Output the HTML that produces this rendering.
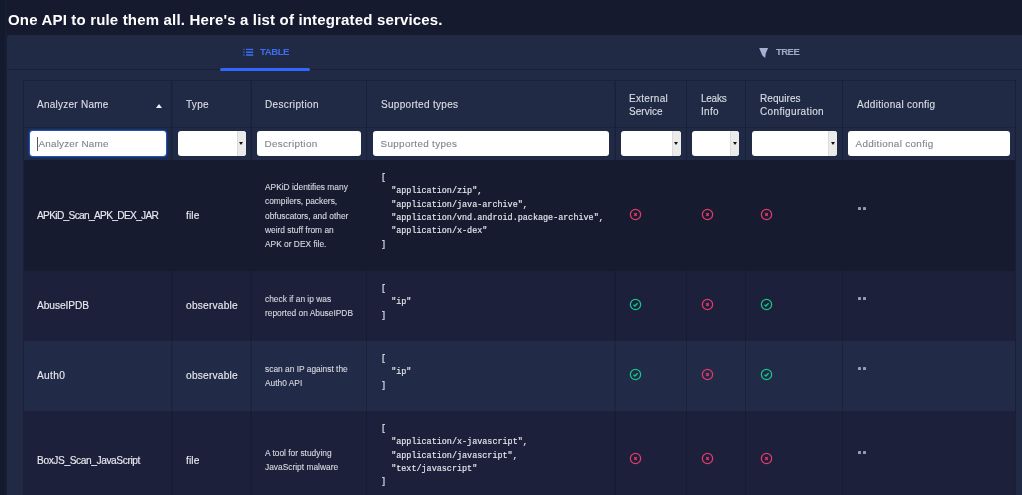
<!DOCTYPE html>
<html><head><meta charset="utf-8">
<style>
*{box-sizing:border-box;margin:0;padding:0}
html,body{width:1022px;height:495px;overflow:hidden;background:#151a2f;font-family:"Liberation Sans",sans-serif;color:#e6e8ee}
.a{position:absolute;white-space:nowrap;will-change:transform}
.tab{font-size:9.6px;font-weight:bold;line-height:12px}
.th{-webkit-text-stroke:0.14px #d9dde6;font-size:10px;color:#d9dde6;line-height:13.3px;letter-spacing:0.3px}
.cell{-webkit-text-stroke:0.14px #e8eaf0;font-size:10.2px;color:#e8eaf0;line-height:13px}
.desc{-webkit-text-stroke:0.1px #d8dbe2;font-size:8.4px;color:#d8dbe2;line-height:14.3px}
.mono{-webkit-text-stroke:0.15px #e6e8ee;font-family:"Liberation Mono",monospace;font-size:8.45px;color:#e6e8ee;line-height:13.35px;white-space:pre}
.inp{background:#fff;border-radius:3px;height:24.6px;top:131.1px}
.arr{position:absolute;right:0;top:0;width:9px;height:24.6px;background:#ebebeb;border-left:1px solid #dcdcdc;border-radius:0 3px 3px 0}
.arr:after{content:"";position:absolute;left:1.8px;top:11px;border-left:2.5px solid transparent;border-right:2.5px solid transparent;border-top:3px solid #111}
.ph{-webkit-text-stroke:0.12px #80858f;font-size:9.9px;color:#80858f;line-height:24px;padding-top:1.2px;padding-left:7.5px;letter-spacing:0.33px}
.ic{width:13px;height:13px}
.ic svg{display:block}
</style></head><body>

<div class="a" style="left:0;top:0;width:5px;height:495px;background:#141a2e"></div>
<div class="a" style="left:5px;top:0;width:2px;height:495px;background:#171d34"></div>
<div class="a" style="left:8px;top:10px;font-size:15px;font-weight:bold;color:#fff;letter-spacing:0.17px;line-height:20px">One API to rule them all. Here's a list of integrated services.</div>
<div class="a" style="left:7px;top:35px;width:1030px;height:470px;background:#212a45;border-radius:3px"></div>
<div class="a" style="left:7px;top:69px;width:1015px;height:1px;background:#1a1f35"></div>
<div class="a" style="left:220px;top:68.3px;width:90px;height:2.6px;background:#3366ff;border-radius:2px"></div>
<svg width="12" height="10" viewBox="0 0 12 10" style="position:absolute;left:242px;top:47px"><g fill="#3a6cf4"><rect x="1" y="1.8" width="1.8" height="1.3" opacity=".55"/><rect x="4" y="1.8" width="7.2" height="1.3"/><rect x="1" y="4.5" width="1.8" height="1.5" opacity=".55"/><rect x="4" y="4.5" width="7.2" height="1.5"/><rect x="1" y="7.2" width="1.8" height="1.6" opacity=".55"/><rect x="4" y="7.2" width="7.2" height="1.6"/></g></svg>
<div class="a tab" style="left:260px;top:45.6px;color:#3d6cf0;letter-spacing:-0.45px">TABLE</div>
<svg width="12" height="12" viewBox="0 0 12 12" style="position:absolute;left:757px;top:46px"><polygon points="2.2,2 11.1,2 8.7,7.6 8.3,11.6 7.5,11.4 5.2,9.2" fill="#a5b1d0"/></svg>
<div class="a tab" style="left:776px;top:45.6px;color:#a0abc8;letter-spacing:-0.6px">TREE</div>
<div class="a" style="left:23px;top:80px;width:993px;height:1px;background:#1c213a"></div>
<div class="a" style="left:23px;top:80px;width:1px;height:420px;background:#1a1f36"></div>
<div class="a" style="left:1015px;top:80px;width:1px;height:420px;background:#1a1f36"></div>
<div class="a" style="left:24px;top:127px;width:991px;height:1px;background:#1d223b"></div>
<div class="a" style="left:171px;top:81px;width:1px;height:79px;background:rgba(22,26,50,0.6)"></div>
<div class="a" style="left:172px;top:81px;width:1px;height:79px;background:rgba(22,26,50,0.3)"></div>
<div class="a" style="left:250px;top:81px;width:1px;height:79px;background:rgba(22,26,50,0.3)"></div>
<div class="a" style="left:251px;top:81px;width:1px;height:79px;background:rgba(22,26,50,0.6)"></div>
<div class="a" style="left:366px;top:81px;width:1px;height:79px;background:rgba(22,26,50,0.6)"></div>
<div class="a" style="left:614px;top:81px;width:1px;height:79px;background:rgba(22,26,50,0.3)"></div>
<div class="a" style="left:615px;top:81px;width:1px;height:79px;background:rgba(22,26,50,0.6)"></div>
<div class="a" style="left:686px;top:81px;width:1px;height:79px;background:rgba(22,26,50,0.6)"></div>
<div class="a" style="left:745px;top:81px;width:1px;height:79px;background:rgba(22,26,50,0.6)"></div>
<div class="a" style="left:842px;top:81px;width:1px;height:79px;background:rgba(22,26,50,0.6)"></div>
<div class="a th" style="left:37px;top:98px;letter-spacing:0.25px">Analyzer Name</div>
<div class="a th" style="left:186px;top:98px;letter-spacing:0.3px">Type</div>
<div class="a th" style="left:264.5px;top:98px;letter-spacing:0.35px">Description</div>
<div class="a th" style="left:381px;top:98px;letter-spacing:0.3px">Supported types</div>
<div class="a th" style="left:629px;top:92px;letter-spacing:0.3px">External<br><span style="letter-spacing:0.04px">Service</span></div>
<div class="a th" style="left:700.5px;top:92px;letter-spacing:0.3px"><span style="letter-spacing:-0.26px">Leaks</span><br>Info</div>
<div class="a th" style="left:760px;top:92px;letter-spacing:0.35px"><span style="letter-spacing:0.08px">Requires</span><br>Configuration</div>
<div class="a th" style="left:857px;top:98px;letter-spacing:0.3px">Additional config</div>
<div class="a" style="left:155.8px;top:104px;width:0;height:0;border-left:3.7px solid transparent;border-right:3.7px solid transparent;border-bottom:4px solid #f2f2f2"></div>
<div class="a inp" style="left:30px;width:136px;box-shadow:0 0 0 1px #2055ad,0 0 1px 1.8px rgba(18,60,135,.7)"><div class="ph" style="padding-left:8.5px;letter-spacing:0.2px">Analyzer Name</div><div style="position:absolute;left:7px;top:5.8px;width:1px;height:14px;background:#555"></div></div>
<div class="a inp" style="left:177.6px;width:67.6px"><div class="arr"></div></div>
<div class="a inp" style="left:256.6px;width:104.4px"><div class="ph">Description</div></div>
<div class="a inp" style="left:373px;width:236.3px"><div class="ph">Supported types</div></div>
<div class="a inp" style="left:621.3px;width:59.5px"><div class="arr"></div></div>
<div class="a inp" style="left:692.3px;width:47.4px"><div class="arr"></div></div>
<div class="a inp" style="left:752px;width:84.8px"><div class="arr"></div></div>
<div class="a inp" style="left:848.4px;width:161.6px"><div class="ph">Additional config</div></div>
<div class="a" style="left:24px;top:160px;width:991px;height:110.5px;background:#171b30"></div>
<div class="a" style="left:24px;top:270.5px;width:991px;height:70.5px;background:#1c203a"></div>
<div class="a" style="left:24px;top:341px;width:991px;height:70px;background:#212a46"></div>
<div class="a" style="left:24px;top:411px;width:991px;height:90px;background:#1c203a"></div>
<div class="a" style="left:171px;top:270.5px;width:1px;height:230px;background:rgba(10,12,28,0.22)"></div>
<div class="a" style="left:172px;top:270.5px;width:1px;height:230px;background:rgba(10,12,28,0.11)"></div>
<div class="a" style="left:250px;top:270.5px;width:1px;height:230px;background:rgba(10,12,28,0.11)"></div>
<div class="a" style="left:251px;top:270.5px;width:1px;height:230px;background:rgba(10,12,28,0.22)"></div>
<div class="a" style="left:366px;top:270.5px;width:1px;height:230px;background:rgba(10,12,28,0.22)"></div>
<div class="a" style="left:614px;top:270.5px;width:1px;height:230px;background:rgba(10,12,28,0.11)"></div>
<div class="a" style="left:615px;top:270.5px;width:1px;height:230px;background:rgba(10,12,28,0.22)"></div>
<div class="a" style="left:686px;top:270.5px;width:1px;height:230px;background:rgba(10,12,28,0.22)"></div>
<div class="a" style="left:745px;top:270.5px;width:1px;height:230px;background:rgba(10,12,28,0.22)"></div>
<div class="a" style="left:842px;top:270.5px;width:1px;height:230px;background:rgba(10,12,28,0.22)"></div>
<div class="a cell" style="left:37px;top:208.8px;letter-spacing:-0.69px">APKiD_Scan_APK_DEX_JAR</div>
<div class="a cell" style="left:186px;top:208.8px;letter-spacing:0.1px">file</div>
<div class="a desc" style="left:264.5px;top:180.2px;letter-spacing:0px">APKiD identifies many<br>compilers, packers,<br>obfuscators, and other<br>weird stuff from an<br>APK or DEX file.</div>
<div class="a mono" style="left:381px;top:172px">[
  "application/zip",
  "application/java-archive",
  "application/vnd.android.package-archive",
  "application/x-dex"
]</div>
<div class="a ic" style="left:629px;top:208px"><svg width="13" height="13" viewBox="0 0 13 13"><circle cx="6.5" cy="6.5" r="5.15" fill="none" stroke="#e23a6c" stroke-width="1.25"/><path d="M5.3 5.3L7.7 7.7M7.7 5.3L5.3 7.7" stroke="#e23a6c" stroke-width="1.35"/></svg></div>
<div class="a ic" style="left:700.5px;top:208px"><svg width="13" height="13" viewBox="0 0 13 13"><circle cx="6.5" cy="6.5" r="5.15" fill="none" stroke="#e23a6c" stroke-width="1.25"/><path d="M5.3 5.3L7.7 7.7M7.7 5.3L5.3 7.7" stroke="#e23a6c" stroke-width="1.35"/></svg></div>
<div class="a ic" style="left:759.5px;top:208px"><svg width="13" height="13" viewBox="0 0 13 13"><circle cx="6.5" cy="6.5" r="5.15" fill="none" stroke="#e23a6c" stroke-width="1.25"/><path d="M5.3 5.3L7.7 7.7M7.7 5.3L5.3 7.7" stroke="#e23a6c" stroke-width="1.35"/></svg></div>
<div class="a" style="left:857.6px;top:206.8px;width:3.2px;height:3px;background:#c9ccd4;border-radius:0.6px;opacity:.72"></div>
<div class="a" style="left:862.8px;top:206.8px;width:3.2px;height:3px;background:#c9ccd4;border-radius:0.6px;opacity:.72"></div>
<div class="a cell" style="left:37px;top:298.8px;letter-spacing:-0.08px">AbuseIPDB</div>
<div class="a cell" style="left:186px;top:298.8px;letter-spacing:0.21px">observable</div>
<div class="a desc" style="left:264.5px;top:292px;letter-spacing:0px">check if an ip was<br>reported on AbuseIPDB</div>
<div class="a mono" style="left:381px;top:282.7px">[
  "ip"
]</div>
<div class="a ic" style="left:629px;top:298px"><svg width="13" height="13" viewBox="0 0 13 13"><circle cx="6.5" cy="6.5" r="5.15" fill="none" stroke="#15c68c" stroke-width="1.25"/><path d="M4.5 6.7L5.9 8.0L8.6 5.2" fill="none" stroke="#15c68c" stroke-width="1.4"/></svg></div>
<div class="a ic" style="left:700.5px;top:298px"><svg width="13" height="13" viewBox="0 0 13 13"><circle cx="6.5" cy="6.5" r="5.15" fill="none" stroke="#e23a6c" stroke-width="1.25"/><path d="M5.3 5.3L7.7 7.7M7.7 5.3L5.3 7.7" stroke="#e23a6c" stroke-width="1.35"/></svg></div>
<div class="a ic" style="left:759.5px;top:298px"><svg width="13" height="13" viewBox="0 0 13 13"><circle cx="6.5" cy="6.5" r="5.15" fill="none" stroke="#15c68c" stroke-width="1.25"/><path d="M4.5 6.7L5.9 8.0L8.6 5.2" fill="none" stroke="#15c68c" stroke-width="1.4"/></svg></div>
<div class="a" style="left:857.6px;top:296.8px;width:3.2px;height:3px;background:#c9ccd4;border-radius:0.6px;opacity:.72"></div>
<div class="a" style="left:862.8px;top:296.8px;width:3.2px;height:3px;background:#c9ccd4;border-radius:0.6px;opacity:.72"></div>
<div class="a cell" style="left:37px;top:369.4px;letter-spacing:0.3px">Auth0</div>
<div class="a cell" style="left:186px;top:369.4px;letter-spacing:0.21px">observable</div>
<div class="a desc" style="left:264.5px;top:361.9px;letter-spacing:0px">scan an IP against the<br>Auth0 API</div>
<div class="a mono" style="left:381px;top:352.7px">[
  "ip"
]</div>
<div class="a ic" style="left:629px;top:368.3px"><svg width="13" height="13" viewBox="0 0 13 13"><circle cx="6.5" cy="6.5" r="5.15" fill="none" stroke="#15c68c" stroke-width="1.25"/><path d="M4.5 6.7L5.9 8.0L8.6 5.2" fill="none" stroke="#15c68c" stroke-width="1.4"/></svg></div>
<div class="a ic" style="left:700.5px;top:368.3px"><svg width="13" height="13" viewBox="0 0 13 13"><circle cx="6.5" cy="6.5" r="5.15" fill="none" stroke="#e23a6c" stroke-width="1.25"/><path d="M5.3 5.3L7.7 7.7M7.7 5.3L5.3 7.7" stroke="#e23a6c" stroke-width="1.35"/></svg></div>
<div class="a ic" style="left:759.5px;top:368.3px"><svg width="13" height="13" viewBox="0 0 13 13"><circle cx="6.5" cy="6.5" r="5.15" fill="none" stroke="#15c68c" stroke-width="1.25"/><path d="M4.5 6.7L5.9 8.0L8.6 5.2" fill="none" stroke="#15c68c" stroke-width="1.4"/></svg></div>
<div class="a" style="left:857.6px;top:366.8px;width:3.2px;height:3px;background:#c9ccd4;border-radius:0.6px;opacity:.72"></div>
<div class="a" style="left:862.8px;top:366.8px;width:3.2px;height:3px;background:#c9ccd4;border-radius:0.6px;opacity:.72"></div>
<div class="a cell" style="left:37px;top:454.1px;letter-spacing:-0.41px">BoxJS_Scan_JavaScript</div>
<div class="a cell" style="left:186px;top:454.1px;letter-spacing:0.1px">file</div>
<div class="a desc" style="left:264.5px;top:446px;letter-spacing:0px">A tool for studying<br>JavaScript malware</div>
<div class="a mono" style="left:381px;top:423.4px">[
  "application/x-javascript",
  "application/javascript",
  "text/javascript"
]</div>
<div class="a ic" style="left:629px;top:452.3px"><svg width="13" height="13" viewBox="0 0 13 13"><circle cx="6.5" cy="6.5" r="5.15" fill="none" stroke="#e23a6c" stroke-width="1.25"/><path d="M5.3 5.3L7.7 7.7M7.7 5.3L5.3 7.7" stroke="#e23a6c" stroke-width="1.35"/></svg></div>
<div class="a ic" style="left:700.5px;top:452.3px"><svg width="13" height="13" viewBox="0 0 13 13"><circle cx="6.5" cy="6.5" r="5.15" fill="none" stroke="#e23a6c" stroke-width="1.25"/><path d="M5.3 5.3L7.7 7.7M7.7 5.3L5.3 7.7" stroke="#e23a6c" stroke-width="1.35"/></svg></div>
<div class="a ic" style="left:759.5px;top:452.3px"><svg width="13" height="13" viewBox="0 0 13 13"><circle cx="6.5" cy="6.5" r="5.15" fill="none" stroke="#e23a6c" stroke-width="1.25"/><path d="M5.3 5.3L7.7 7.7M7.7 5.3L5.3 7.7" stroke="#e23a6c" stroke-width="1.35"/></svg></div>
<div class="a" style="left:857.6px;top:450.8px;width:3.2px;height:3px;background:#c9ccd4;border-radius:0.6px;opacity:.72"></div>
<div class="a" style="left:862.8px;top:450.8px;width:3.2px;height:3px;background:#c9ccd4;border-radius:0.6px;opacity:.72"></div>
</body></html>
